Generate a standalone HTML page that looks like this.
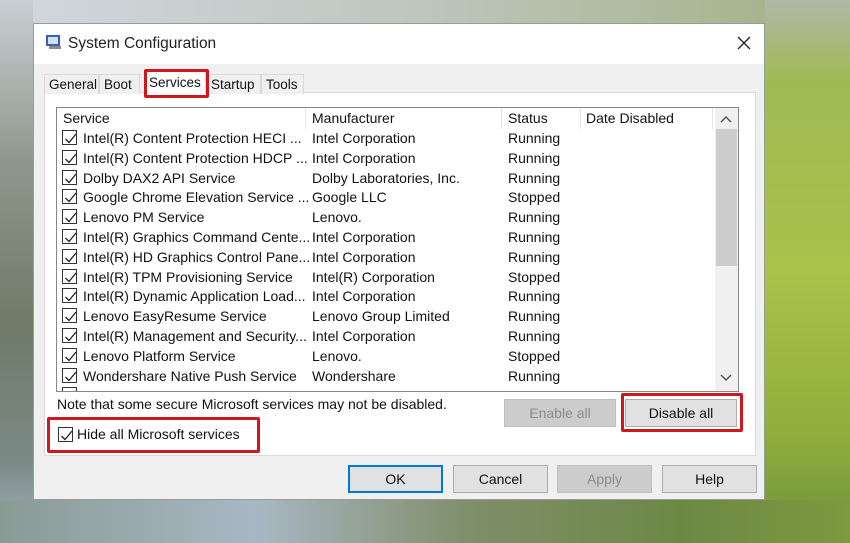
<!DOCTYPE html>
<html><head><style>
*{margin:0;padding:0;box-sizing:border-box}
body{width:850px;height:543px;overflow:hidden;position:relative;font-family:"Liberation Sans",sans-serif;font-size:13.5px;color:#111;
background:linear-gradient(90deg,#7d8a7a 0%,#8fa08a 4%,#a6b88f 90%,#b8cc6a 100%)}
.bg1{position:absolute;left:765px;top:0;width:85px;height:543px;background:linear-gradient(180deg,#b0b8a8 0%,#9fba54 15%,#a9c24a 50%,#8fae3a 80%,#6f8f40 100%)}
.bg2{position:absolute;left:0;top:0;width:33px;height:543px;background:linear-gradient(180deg,#c9cfd3 0%,#8d978c 30%,#6f7a68 60%,#7b8a86 85%,#a8b4bf 100%)}
.bg3{position:absolute;left:0;top:500px;width:850px;height:43px;background:linear-gradient(90deg,#8a9a94 0%,#a9b7c4 30%,#7f8f6a 55%,#6d8845 80%,#7e9a3e 100%)}
.bg4{position:absolute;left:33px;top:0;width:732px;height:23px;background:linear-gradient(90deg,#d0d6dc,#bfc7c0 50%,#a8b48e 100%)}
.win{position:absolute;left:33px;top:23px;width:732px;height:477px;background:#f0f0f0;border:1px solid #9a9a9a}
.title{position:absolute;left:0;top:0;width:730px;height:40px;background:#fff}
.abs{position:absolute;white-space:nowrap}
.panel{position:absolute;left:10px;top:68px;width:712px;height:364px;background:#fff;border:1px solid #d9d9d9}
.tab{position:absolute;top:50px;height:20px;border:1px solid #d9d9d9;border-bottom:none;background:#f0f0f0;padding:2px 0 0 4px;font-size:13.5px;overflow:hidden}
.list{position:absolute;left:22px;top:83px;width:683px;height:285px;border:1px solid #828790;background:#fff;overflow:hidden}
.row{position:absolute;left:0;height:20px;font-size:14px;line-height:20px}
.cb{position:absolute;width:15px;height:15px;border:1px solid #333;background:#fff}
.cb svg{position:absolute;left:1px;top:1px}
.btn{position:absolute;height:28px;border:1px solid #adadad;background:#e1e1e1;text-align:center;line-height:26px;font-size:14px}
.dis{color:#8c8c8c;background:#cccccc;border-color:#bfbfbf}
.red{position:absolute;border:3px solid #d0161e;border-radius:2px}
</style></head><body>
<div class="bg1"></div><div class="bg2"></div><div class="bg3"></div><div class="bg4"></div>
<div class="win">
 <div class="title">
  <svg class="abs" style="left:11px;top:9px" width="18" height="18" viewBox="0 0 18 18"><rect x="1" y="2" width="14" height="11" fill="#3a5fb0"/><rect x="3" y="4" width="10" height="7" fill="#cfe0f5"/><rect x="4" y="13" width="12" height="3" fill="#8a8a8a"/></svg>
  <div class="abs" style="left:34px;top:11px;font-size:15.5px;color:#222">System Configuration</div>
  <svg class="abs" style="left:703px;top:12px" width="14" height="14" viewBox="0 0 14 14"><path d="M1 1L13 13M13 1L1 13" stroke="#222" stroke-width="1.3"/></svg>
 </div>
 <div class="panel"></div>
 <div class="tab" style="left:10px;width:55px">General</div>
 <div class="tab" style="left:65px;width:41px">Boot</div>
 <div class="tab" style="left:110px;top:46px;height:24px;width:62px;background:#fff;padding-top:4px">Services</div>
 <div class="tab" style="left:172px;width:55px">Startup</div>
 <div class="tab" style="left:227px;width:43px">Tools</div>
 <div class="red" style="left:110px;top:45px;width:65px;height:29px"></div>
 <div class="list">
  <div class="row" style="top:0px;left:6px">Service</div>
  <div class="row" style="top:0px;left:255px">Manufacturer</div>
  <div class="row" style="top:0px;left:451px">Status</div>
  <div class="row" style="top:0px;left:529px">Date Disabled</div>
  <div class="abs" style="left:248px;top:0;width:1px;height:21px;background:#e5e5e5"></div>
  <div class="abs" style="left:444px;top:0;width:1px;height:21px;background:#e5e5e5"></div>
  <div class="abs" style="left:523px;top:0;width:1px;height:21px;background:#e5e5e5"></div>
  <div class="abs" style="left:655px;top:0;width:1px;height:21px;background:#e5e5e5"></div>
  <div class="abs" style="left:658px;top:0;width:24px;height:283px;background:#f0f0f0"></div>
  <div class="abs" style="left:659px;top:21px;width:21px;height:137px;background:#cdcdcd"></div>
  <svg class="abs" style="left:663px;top:7px" width="12" height="8"><path d="M1 7L6 2L11 7" stroke="#555" stroke-width="1.5" fill="none"/></svg>
  <svg class="abs" style="left:663px;top:266px" width="12" height="8"><path d="M1 1L6 6L11 1" stroke="#555" stroke-width="1.5" fill="none"/></svg>
  <div id="rows"></div>
 </div>
 <div class="abs" style="left:23px;top:372px;font-size:14px">Note that some secure Microsoft services may not be disabled.</div>
 <div class="btn dis" style="left:470px;top:375px;width:112px">Enable all</div>
 <div class="btn" style="left:591px;top:375px;width:112px">Disable all</div>
 <div class="red" style="left:587px;top:369px;width:122px;height:39px"></div>
 <div class="cb" style="left:24px;top:403px"><svg width="13" height="13"><path d="M1.5 7L5 10.5L12 2" stroke="#222" stroke-width="1.3" fill="none"/></svg></div>
 <div class="abs" style="left:43px;top:402px;font-size:14px">Hide all Microsoft services</div>
 <div class="red" style="left:13px;top:393px;width:213px;height:36px"></div>
 <div class="btn" style="left:314px;top:441px;width:95px;border:2px solid #0078d7;line-height:24px">OK</div>
 <div class="btn" style="left:419px;top:441px;width:95px">Cancel</div>
 <div class="btn dis" style="left:523px;top:441px;width:95px">Apply</div>
 <div class="btn" style="left:628px;top:441px;width:95px">Help</div>
</div>
<script>
var d=[["Intel(R) Content Protection HECI ...","Intel Corporation","Running"],["Intel(R) Content Protection HDCP ...","Intel Corporation","Running"],["Dolby DAX2 API Service","Dolby Laboratories, Inc.","Running"],["Google Chrome Elevation Service ...","Google LLC","Stopped"],["Lenovo PM Service","Lenovo.","Running"],["Intel(R) Graphics Command Cente...","Intel Corporation","Running"],["Intel(R) HD Graphics Control Pane...","Intel Corporation","Running"],["Intel(R) TPM Provisioning Service","Intel(R) Corporation","Stopped"],["Intel(R) Dynamic Application Load...","Intel Corporation","Running"],["Lenovo EasyResume Service","Lenovo Group Limited","Running"],["Intel(R) Management and Security...","Intel Corporation","Running"],["Lenovo Platform Service","Lenovo.","Stopped"],["Wondershare Native Push Service","Wondershare","Running"],["","",""]];
var h="";d.forEach(function(r,i){var t=20+i*19.8;
h+='<div class="cb" style="left:5px;top:'+(t+2)+'px"><svg width="13" height="13"><path d="M1.5 7L5 10.5L12 2" stroke="#222" stroke-width="1.3" fill="none"/></svg></div>';
h+='<div class="row" style="top:'+t+'px;left:26px">'+r[0]+'</div><div class="row" style="top:'+t+'px;left:255px">'+r[1]+'</div><div class="row" style="top:'+t+'px;left:451px">'+r[2]+'</div>';});
document.getElementById("rows").innerHTML=h;
</script>
</body></html>
